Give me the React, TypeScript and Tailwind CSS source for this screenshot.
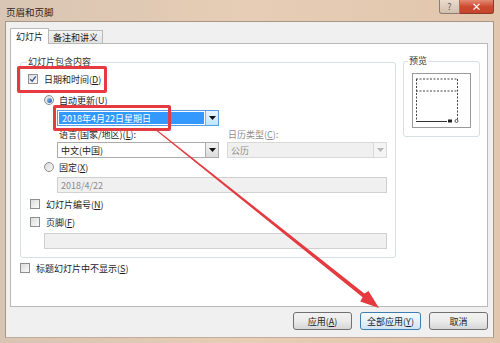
import React from "react";

const font = { fontFamily: '"Noto Sans CJK SC", "Noto Sans", sans-serif' };

const Check = ({ checked = false }: { checked?: boolean }) => (
    <div className="w-[10px] h-[10px] border border-[#8e8f8f] bg-gradient-to-br from-[#dcdcdc] to-[#fbfbfb] flex items-center justify-center shrink-0">
        {checked ? (
            <svg width="8" height="8" viewBox="0 0 8 8">
                <path d="M1.2 4.2 L3.2 6.2 L6.8 1.4" fill="none" stroke="#3d5a8f" strokeWidth="1.4" />
            </svg>
        ) : null}
    </div>
);

const Radio = ({ on = false }: { on?: boolean }) => (
    <div className="w-[10px] h-[10px] rounded-full border border-[#8e8f8f] bg-gradient-to-br from-[#d8d8d8] to-[#fafafa] flex items-center justify-center shrink-0">
        {on ? <div className="w-[5px] h-[5px] rounded-full bg-gradient-to-br from-[#8fc3f2] to-[#1b5aa8]" /> : null}
    </div>
);

const Arrow = ({ disabled = false, focus = false }: { disabled?: boolean; focus?: boolean }) => (
    <div
        className={
            "w-[13px] h-full flex items-center justify-center border-l " +
            (focus
                ? "border-[#7eb4ea] bg-gradient-to-b from-[#eaf6fd] to-[#bee6fd]"
                : disabled
                ? "border-[#d9d9d9] bg-[#f4f4f4]"
                : "border-[#acacac] bg-gradient-to-b from-[#f2f2f2] to-[#dcdcdc]")
        }
    >
        <svg width="7" height="4" viewBox="0 0 7 4">
            <path d="M0 0 H7 L3.5 4 Z" fill={disabled ? "#b8b8b8" : "#111"} />
        </svg>
    </div>
);

export default function App() {
    return (
        <div
            className="relative w-[500px] h-[343px] overflow-hidden text-[9px] leading-none text-[#1c1c1c] bg-gradient-to-r from-[#d8c5b3] via-[#e7cdb5] to-[#e2c6ae]"
            style={font}
        >
            {/* title bar */}
            <div className="h-[21px] flex items-start justify-between pl-[6px] pr-[6px]">
                <span className="mt-[8px] text-[9.5px] text-[#2a2320]">页眉和页脚</span>
                <div className="flex">
                    <div className="w-[21px] h-[14px] rounded-bl-[3px] border border-t-0 border-[#8b7d72] bg-gradient-to-b from-[#eadbcd] to-[#d2bfae] flex items-center justify-center text-[9px] text-[#5a5a5a]">
                        ?
                    </div>
                    <div className="w-[34px] h-[14px] rounded-br-[3px] border border-t-0 border-l-0 border-[#8a3a2a] bg-gradient-to-b from-[#e28a73] via-[#cc4a30] to-[#c7442a] flex items-center justify-center text-[10px] font-bold text-white">
                        ×
                    </div>
                </div>
            </div>

            {/* client */}
            <div className="ml-[5px] mr-[6px] h-[317px] bg-[#f0f0f0] border border-[#a89584] border-b-[#c0ad9c]">
                {/* tabs */}
                <div className="h-[21px] flex items-end pl-[4px]">
                    <div className="relative z-10 -mb-px h-[16px] w-[39px] bg-white border border-b-0 border-[#b9b9b9] flex items-center justify-center">
                        幻灯片
                    </div>
                    <div className="h-[13px] w-[54px] bg-gradient-to-b from-[#f3f3f3] to-[#e3e3e3] border border-l-0 border-b-0 border-[#b9b9b9] flex items-center justify-center">
                        备注和讲义
                    </div>
                </div>

                {/* panel */}
                <div className="ml-[4px] mr-[5px] h-[264px] bg-white border border-[#b9b9b9] flex pl-[9px] pt-[18px]">
                    <div className="flex flex-col">
                        <div className="relative w-[376px] h-[196px] border border-[#d5dfe5] rounded-[3px] flex flex-col pl-[6px]">
                            <span className="absolute -top-[6px] left-[6px] bg-white px-[1px] text-[#333]">幻灯片包含内容</span>

                            <div className="mt-[9px] h-[14px] flex items-center gap-[6px] pl-[1px]">
                                <Check checked />
                                <span>
                                    日期和时间(<u>D</u>)
                                </span>
                            </div>

                            <div className="mt-[7px] h-[14px] flex items-center gap-[5px] pl-[17px]">
                                <Radio on />
                                <span>
                                    自动更新(<u>U</u>)
                                </span>
                            </div>

                            <div className="mt-[3px] ml-[30px] w-[162px] h-[16px] flex border border-[#569de5]">
                                <div className="flex-1 bg-[#3399ff] text-white flex items-center pl-[3px] m-[1px]">
                                    2018年4月22日星期日
                                </div>
                                <Arrow focus />
                            </div>

                            <div className="mt-[2px] h-[12px] flex items-center pl-[32px]">
                                <span className="w-[169px]">
                                    语言(国家/地区)(<u>L</u>):
                                </span>
                                <span className="text-[#8d8d8d]">
                                    日历类型(<u>C</u>):
                                </span>
                            </div>

                            <div className="mt-[2px] flex pl-[30px] gap-[8px]">
                                <div className="w-[162px] h-[16px] flex border border-[#acacac] bg-white">
                                    <div className="flex-1 flex items-center pl-[3px]">中文(中国)</div>
                                    <Arrow />
                                </div>
                                <div className="w-[160px] h-[16px] flex border border-[#d9d9d9] bg-[#f0f0f0]">
                                    <div className="flex-1 flex items-center pl-[3px] text-[#8d8d8d]">公历</div>
                                    <Arrow disabled />
                                </div>
                            </div>

                            <div className="mt-[2px] h-[14px] flex items-center gap-[5px] pl-[17px]">
                                <Radio />
                                <span>
                                    固定(<u>X</u>)
                                </span>
                            </div>

                            <div className="mt-[3px] ml-[30px] w-[330px] h-[16px] border border-[#d0d0d0] bg-[#f0f0f0] flex items-center pl-[3px] text-[#8d8d8d]">
                                2018/4/22
                            </div>

                            <div className="mt-[4px] h-[14px] flex items-center gap-[6px] pl-[3px]">
                                <Check />
                                <span>
                                    幻灯片编号(<u>N</u>)
                                </span>
                            </div>

                            <div className="mt-[4px] h-[14px] flex items-center gap-[6px] pl-[3px]">
                                <Check />
                                <span>
                                    页脚(<u>F</u>)
                                </span>
                            </div>

                            <div className="mt-[4px] ml-[17px] w-[343px] h-[16px] border border-[#d0d0d0] bg-[#f0f0f0]" />
                        </div>

                        <div className="mt-[3px] h-[14px] flex items-center gap-[6px]">
                            <Check />
                            <span>
                                标题幻灯片中不显示(<u>S</u>)
                            </span>
                        </div>
                    </div>

                    {/* preview */}
                    <div className="ml-[7px] -mt-px relative w-[77px] h-[76px] border border-[#d5dfe5] rounded-[3px] flex justify-center pt-[11px]">
                        <span className="absolute -top-[6px] left-[4px] bg-white px-[1px] text-[#333]">预览</span>
                        <div className="w-[59px] h-[55px] border border-[#9a9a9a] bg-white">
                            <svg width="57" height="53" viewBox="0 0 57 53">
                                <g stroke="#444" strokeWidth="1" strokeDasharray="2 1.5" fill="none">
                                    <line x1="3" y1="5" x2="44" y2="5" />
                                    <line x1="3" y1="17" x2="44" y2="17" />
                                    <line x1="3.5" y1="5" x2="3.5" y2="47" />
                                    <line x1="44.5" y1="5" x2="44.5" y2="47" />
                                </g>
                                <line x1="3" y1="47.5" x2="34" y2="47.5" stroke="#333" strokeWidth="1" />
                                <rect x="35" y="45.5" width="4" height="3" fill="#222" />
                                <circle cx="43.5" cy="47" r="1.5" fill="none" stroke="#333" strokeWidth="0.8" />
                            </svg>
                        </div>
                    </div>
                </div>

                {/* buttons */}
                <div className="mt-[5px] flex justify-end gap-[8px] pr-[5px]">
                    <div className="w-[59px] h-[18px] rounded-[3px] border border-[#707070] bg-gradient-to-b from-[#f2f2f2] via-[#ebebeb] to-[#d6d6d6] flex items-center justify-center">
                        应用(<u>A</u>)
                    </div>
                    <div className="w-[61px] h-[18px] rounded-[3px] border border-[#3c7fb1] bg-gradient-to-b from-[#f4f9fc] via-[#e6f1f9] to-[#cfe4f3] flex items-center justify-center">
                        全部应用(<u>Y</u>)
                    </div>
                    <div className="w-[59px] h-[18px] rounded-[3px] border border-[#707070] bg-gradient-to-b from-[#f2f2f2] via-[#ebebeb] to-[#d6d6d6] flex items-center justify-center">
                        取消
                    </div>
                </div>
            </div>

            {/* annotation overlay */}
            <div className="absolute left-[17px] top-[66px] w-[90px] h-[27px] border-[3px] border-[#e53a3f] rounded-[2px]" />
            <div className="absolute left-[53px] top-[105px] w-[118px] h-[26px] border-[3px] border-[#e53a3f] rounded-[2px]" />
            <svg className="absolute left-0 top-0" width="500" height="343" viewBox="0 0 500 343">
                <polygon
                    points="155.3,128.6 364.3,293.6 368.5,290.9 379,308 360.2,301.4 362.6,297.2 154.7,129.4"
                    fill="#e53a3f"
                />
            </svg>
        </div>
    );
}
